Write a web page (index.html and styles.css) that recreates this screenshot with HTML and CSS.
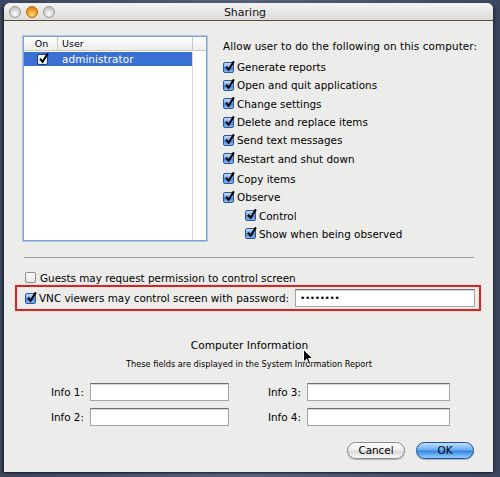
FILE: index.html
```html
<!DOCTYPE html>
<html>
<head>
<meta charset="utf-8">
<link rel="stylesheet" href="styles.css">
</head>
<body>
<div class="window">
  <div class="titlebar">
    <div class="lights">
      <span class="light gray"></span>
      <span class="light orange"></span>
      <span class="light gray"></span>
    </div>
    <div class="title">Sharing</div>
  </div>
  <div class="content">
    <div class="top">
      <div class="table">
        <div class="thead">
          <div class="col-on">On</div>
          <div class="col-user">User</div>
          <div class="col-end"></div>
        </div>
        <div class="tbody">
          <div class="rows">
            <div class="row selected">
              <div class="col-on"><span class="cb plain"><svg class="ck" viewBox="0 0 12 12"><path d="M2.2 6.2 L5 9.6 L10.8 0.4"/></svg></span></div>
              <div class="col-user">administrator</div>
            </div>
          </div>
          <div class="scroll"></div>
        </div>
      </div>
      <div class="perms">
        <div class="perms-head">Allow user to do the following on this computer:</div>
        <div class="plist">
          <div class="prow"><span class="cb"><svg class="ck" viewBox="0 0 12 12"><path d="M2.2 6.2 L5 9.6 L10.8 0.4"/></svg></span>Generate reports</div>
          <div class="prow"><span class="cb"><svg class="ck" viewBox="0 0 12 12"><path d="M2.2 6.2 L5 9.6 L10.8 0.4"/></svg></span>Open and quit applications</div>
          <div class="prow"><span class="cb"><svg class="ck" viewBox="0 0 12 12"><path d="M2.2 6.2 L5 9.6 L10.8 0.4"/></svg></span>Change settings</div>
          <div class="prow"><span class="cb"><svg class="ck" viewBox="0 0 12 12"><path d="M2.2 6.2 L5 9.6 L10.8 0.4"/></svg></span>Delete and replace items</div>
          <div class="prow"><span class="cb"><svg class="ck" viewBox="0 0 12 12"><path d="M2.2 6.2 L5 9.6 L10.8 0.4"/></svg></span>Send text messages</div>
          <div class="prow"><span class="cb"><svg class="ck" viewBox="0 0 12 12"><path d="M2.2 6.2 L5 9.6 L10.8 0.4"/></svg></span>Restart and shut down</div>
          <div class="prow gap"><span class="cb"><svg class="ck" viewBox="0 0 12 12"><path d="M2.2 6.2 L5 9.6 L10.8 0.4"/></svg></span>Copy items</div>
          <div class="prow"><span class="cb"><svg class="ck" viewBox="0 0 12 12"><path d="M2.2 6.2 L5 9.6 L10.8 0.4"/></svg></span>Observe</div>
          <div class="prow sub"><span class="cb"><svg class="ck" viewBox="0 0 12 12"><path d="M2.2 6.2 L5 9.6 L10.8 0.4"/></svg></span>Control</div>
          <div class="prow sub"><span class="cb"><svg class="ck" viewBox="0 0 12 12"><path d="M2.2 6.2 L5 9.6 L10.8 0.4"/></svg></span>Show when being observed</div>
        </div>
      </div>
    </div>
    <div class="sep"></div>
    <div class="guest"><span class="cb off"></span>Guests may request permission to control screen</div>
    <div class="vnc">
      <span class="cb"><svg class="ck" viewBox="0 0 12 12"><path d="M2.2 6.2 L5 9.6 L10.8 0.4"/></svg></span>
      <span class="vnc-label">VNC viewers may control screen with password:</span>
      <div class="field pw">&#8226;&#8226;&#8226;&#8226;&#8226;&#8226;&#8226;&#8226;</div>
    </div>
    <div class="info-title">Computer Information</div>
    <div class="info-sub">These fields are displayed in the System Information Report</div>
    <div class="info-grid">
      <div class="lbl">Info 1:</div><div class="field"></div>
      <div class="lbl">Info 3:</div><div class="field"></div>
      <div class="lbl">Info 2:</div><div class="field"></div>
      <div class="lbl">Info 4:</div><div class="field"></div>
    </div>
    <div class="buttons">
      <div class="btn">Cancel</div>
      <div class="btn default">OK</div>
    </div>
  </div>
</div>
<svg class="cursor" viewBox="0 0 11 17" width="11" height="17"><path d="M0.5 0.5 L0.5 13 L3.6 10.2 L5.8 15.5 L7.8 14.6 L5.6 9.5 L9.8 9.5 Z" fill="#000" stroke="#fff" stroke-width="1"/></svg>
</body>
</html>
```
FILE: styles.css
```css
html, body {
  margin: 0;
  padding: 0;
}
body {
  width: 500px;
  height: 477px;
  overflow: hidden;
  background: linear-gradient(90deg, #3c465e 0%, #56617a 50%, #3c465e 100%);
  font-family: "DejaVu Sans", "Liberation Sans", sans-serif;
  font-size: 10.4px;
  color: #000;
  position: relative;
}
.window {
  position: relative;
  margin: 3px 0 0 4px;
  width: 489px;
  height: 469px;
  background: #ececea;
  border-radius: 6px 6px 0 0;
  box-shadow: -2px 1px 2px rgba(0, 0, 0, 0.45), 2px 1px 2px rgba(0, 0, 0, 0.35);
  display: flex;
  flex-direction: column;
}
.titlebar {
  height: 17px;
  border-bottom: 1px solid #5e4c33;
  background: linear-gradient(#f3f3f1, #dcdcda);
  border-radius: 6px 6px 0 0;
  display: flex;
  align-items: center;
  position: relative;
}
.lights {
  display: flex;
  gap: 5px;
  margin-left: 5px;
  margin-top: 1px;
}
.light {
  width: 12px;
  height: 12px;
  border-radius: 50%;
  box-sizing: border-box;
  border: 1px solid #9a9a9a;
  background: radial-gradient(circle at 50% 70%, #ffffff 0%, #dadada 45%, #b4b4b4 100%);
}
.light.orange {
  border-color: #b56a12;
  background: radial-gradient(circle at 50% 75%, #ffe08a 0%, #f6a623 45%, #c86b06 100%);
}
.title {
  flex: 1;
  text-align: center;
  font-size: 11px;
  margin-right: 58px;
  margin-top: 1px;
  color: #111;
}
.content {
  padding: 0 19px 0 20px;
  display: flex;
  flex-direction: column;
}
.top {
  display: flex;
  margin-top: 15px;
}
.table {
  flex: none;
  width: 182px;
  height: 203px;
  border: 1px solid #7ea3d8;
  box-shadow: 0 0 0 1px rgba(140, 175, 225, 0.6);
  background: #fff;
  display: flex;
  flex-direction: column;
  margin-left: -1px;
}
.thead {
  height: 13px;
  display: flex;
  border-bottom: 1px solid #c9c9c9;
  background: linear-gradient(#ffffff, #ededed);
  line-height: 13px;
  font-size: 9.5px;
}
.thead .col-on {
  width: 34px;
  text-align: center;
  border-right: 1px solid #c9c9c9;
  box-sizing: border-box;
  padding-left: 2px;
}
.thead .col-user {
  flex: 1;
  padding-left: 4px;
  border-right: 1px solid #c9c9c9;
}
.thead .col-end {
  width: 13px;
}
.tbody {
  flex: 1;
  display: flex;
  padding-top: 1px;
}
.rows {
  flex: 1;
}
.scroll {
  width: 13px;
  border-left: 1px solid #d6d6d6;
}
.row {
  height: 14px;
  display: flex;
  align-items: center;
}
.row.selected {
  background: #3a6fd3;
  color: #fff;
}
.row .col-on {
  width: 34px;
  display: flex;
  justify-content: center;
  padding-left: 2px;
  box-sizing: border-box;
}
.row .col-user {
  padding-left: 4px;
  font-size: 10.4px;
  letter-spacing: 0.1px;
}
.perms {
  margin-left: 16px;
  display: flex;
  flex-direction: column;
}
.perms-head {
  margin-top: 3px;
  line-height: 14px;
  height: 14px;
  white-space: nowrap;
  letter-spacing: 0.1px;
}
.plist {
  margin-top: 5px;
  display: flex;
  flex-direction: column;
}
.prow {
  height: 18.3px;
  display: flex;
  align-items: center;
  gap: 3px;
  white-space: nowrap;
}
.prow.gap {
  margin-top: 2px;
}
.prow.sub {
  margin-left: 22px;
}
.cb {
  width: 11px;
  height: 11px;
  box-sizing: border-box;
  border: 1px solid #2f5396;
  border-radius: 2px;
  background: linear-gradient(#c6defb 0%, #74a9ee 45%, #3f80dc 55%, #86bdf6 100%);
  position: relative;
  flex: none;
  display: inline-block;
}
.cb.plain {
  border-color: #1e3d7a;
  background: linear-gradient(#ffffff, #dfe8f6);
}
.cb.off {
  border-color: #8c8c8c;
  background: linear-gradient(#ffffff, #e4e4e4);
}
.ck {
  position: absolute;
  left: 0;
  top: -2px;
  width: 11px;
  height: 11px;
  overflow: visible;
}
.ck path {
  fill: none;
  stroke: #000;
  stroke-width: 2.2;
  stroke-linecap: butt;
  stroke-linejoin: miter;
}
.sep {
  margin-top: 14px;
  height: 1px;
  background: #9c9c9c;
}
.guest {
  margin-top: 14px;
  display: flex;
  align-items: center;
  gap: 4px;
  height: 12px;
  padding-left: 1px;
  white-space: nowrap;
}
.vnc {
  margin: 1px -7px 0 -9px;
  height: 22px;
  border: 2px solid #e1211c;
  display: flex;
  align-items: center;
  padding: 0 4px 0 8px;
  white-space: nowrap;
}
.vnc .cb {
  margin-top: 1px;
}
.vnc-label {
  margin-left: 3px;
}
.field {
  height: 18px;
  box-sizing: border-box;
  background: #fff;
  border: 1px solid #a4a4a4;
  border-top-color: #6f6f6f;
  box-shadow: inset 0 1px 0 #d8d8d8;
}
.pw {
  margin-left: 6px;
  flex: 1;
  font-size: 9px;
  line-height: 16px;
  padding-left: 4px;
  letter-spacing: -0.4px;
}
.info-title {
  margin-top: 27px;
  text-align: center;
  font-size: 10.6px;
  line-height: 14px;
  margin-left: 1px;
}
.info-sub {
  margin-top: 7px;
  text-align: center;
  font-size: 8.2px;
  line-height: 11px;
}
.info-grid {
  margin-top: 13px;
  margin-left: 16px;
  display: grid;
  grid-template-columns: 45px 139px 68px 143px;
  column-gap: 5px;
  row-gap: 7px;
  align-items: center;
}
.info-grid .lbl {
  text-align: right;
  padding-right: 1px;
  font-size: 10.4px;
}
.buttons {
  margin-top: 16px;
  display: flex;
  justify-content: flex-end;
  gap: 11px;
  margin-right: 0;
}
.btn {
  width: 58px;
  height: 17px;
  box-sizing: border-box;
  border-radius: 9px;
  border: 1px solid #8a8a8a;
  background: linear-gradient(#ffffff 0%, #f1f1f1 45%, #d9d9d9 55%, #f8f8f8 100%);
  text-align: center;
  line-height: 15px;
  font-size: 10.4px;
  box-shadow: 0 1px 1px rgba(0, 0, 0, 0.25);
}
.btn.default {
  border-color: #1f4f9c;
  background: linear-gradient(#bfe0ff 0%, #6aaef2 45%, #3a86e0 55%, #8fd0ff 100%);
}
.cursor {
  position: absolute;
  left: 303px;
  top: 349px;
}
```
